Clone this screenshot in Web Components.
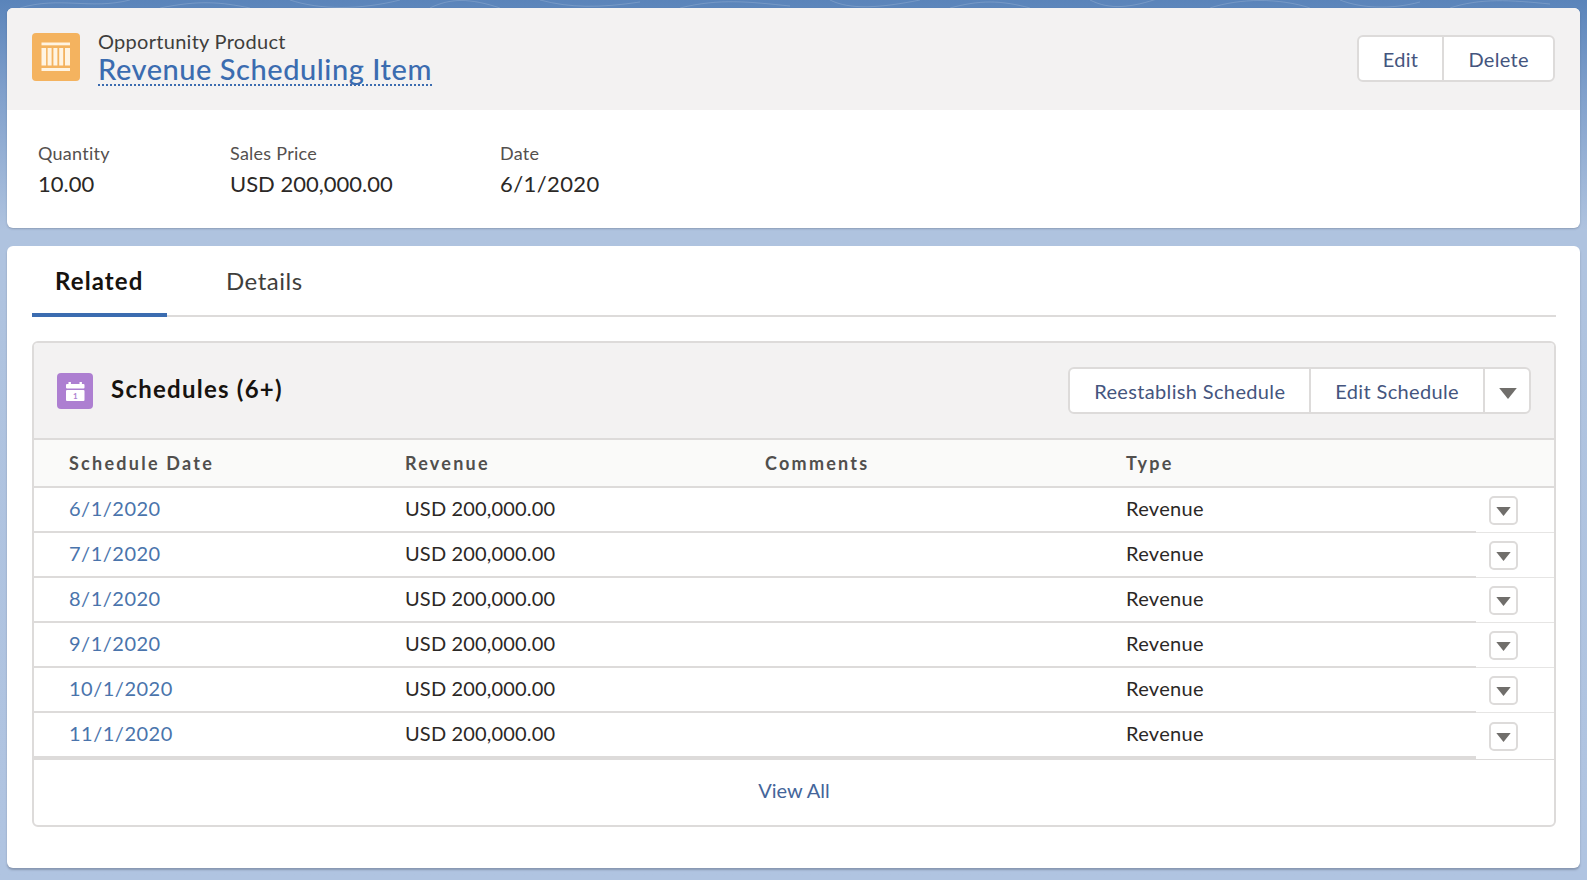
<!DOCTYPE html>
<html lang="en">
<head>
<meta charset="utf-8">
<title>Revenue Scheduling Item</title>
<style>
  html, body { margin: 0; padding: 0; }
  body {
    width: 1587px;
    height: 880px;
    overflow: hidden;
    font-family: Lato, "Open Sans", sans-serif;
    background: linear-gradient(#5a84ba 0, #7f9fcb 90px, #afc3df 230px, #b0c4e1 880px);
  }
  #bg-lines { position: absolute; left: 0; top: 0; width: 1587px; height: 12px; }
  #page { position: relative; display: flex; flex-direction: column; gap: 18px; padding: 8px 7px 0 7px; }
</style>
</head>
<body>
<svg id="bg-lines" viewBox="0 0 1587 12" fill="none" stroke="#fff" stroke-opacity="0.16">
  <path d="M20 8C60-4 90 10 130 0M160 8c40-8 60-6 90 0M290 0c30 10 70 10 110 0M430 8c20-10 40-10 70 0M540 0c30 8 60 8 100 2M680 8c40-10 70-6 110-2M830 0c20 10 50 8 90 0M950 8c30-8 50-8 80 0M1090 0c20 10 40 8 70-2M1210 8c30-10 70-10 100 0M1340 0c20 8 50 10 80 2M1450 8c30-10 60-8 100-4"/>
</svg>
<div id="page">
  <record-highlights icon-title="Opportunity Product" record-title="Revenue Scheduling Item">
    <highlight-field label="Quantity" style="width:192px">10.00</highlight-field>
    <highlight-field label="Sales Price" style="width:270px">USD 200,000.00</highlight-field>
    <highlight-field label="Date" class="date">6/1/2020</highlight-field>
  </record-highlights>
  <related-card>
    <schedule-row date="6/1/2020"></schedule-row>
    <schedule-row date="7/1/2020"></schedule-row>
    <schedule-row date="8/1/2020"></schedule-row>
    <schedule-row date="9/1/2020"></schedule-row>
    <schedule-row date="10/1/2020"></schedule-row>
    <schedule-row date="11/1/2020" last></schedule-row>
  </related-card>
</div>

<script>
const caret = (w, h) => `<svg width="${w}" height="${h}" viewBox="0 0 16 10"><path d="M0 0h16L8 10z" fill="#706e6b"/></svg>`;

class RecordHighlights extends HTMLElement {
    constructor() {
        super();
        this.shadowDOM = this.attachShadow({ mode: "open" });
    }
    connectedCallback() {
        this.shadowDOM.innerHTML = `
      <style>
        * { box-sizing: border-box; }
        :host {
            display: block;
            height: 220px;
            background: #fff;
            border-radius: 6px;
            overflow: hidden;
            box-shadow: 0 1px 2px rgba(60, 70, 90, 0.3);
        }
        .head {
            height: 102px;
            background: #f3f2f2;
            display: flex;
            align-items: flex-start;
            padding: 25px 25px 0 25px;
        }
        .icon {
            width: 48px;
            height: 48px;
            border-radius: 4px;
            background: #f4b35f;
            flex: none;
        }
        .titles { margin-left: 18px; flex: 1; margin-top: -5px; }
        .kind { font-size: 20px; line-height: 26px; color: #3e3e3c; letter-spacing: 0.28px; }
        .name {
            display: inline-block;
            font-size: 29px;
            line-height: 30px;
            font-weight: 500;
            letter-spacing: 0.55px;
            color: #3b6cb0;
            border-bottom: 2px dotted #3b6cb0;
        }
        button-group { margin-top: 2px; }
        .fields { display: flex; padding: 31px 0 0 31px; }
      </style>
      <div class="head">
        <div class="icon">
          <svg width="48" height="48" viewBox="0 0 48 48" fill="#fff4e2">
            <rect x="9.5" y="9.5" width="28.5" height="2.8"/>
            <rect x="9.5" y="15" width="4.6" height="17.5"/>
            <rect x="15.6" y="15" width="4" height="17.5"/>
            <rect x="21.4" y="15" width="4" height="17.5"/>
            <rect x="27.2" y="15" width="4" height="17.5"/>
            <rect x="33" y="15" width="5" height="17.5"/>
            <rect x="9.5" y="35" width="28.5" height="3"/>
          </svg>
        </div>
        <div class="titles">
          <div class="kind">${this.getAttribute("icon-title")}</div>
          <div class="name">${this.getAttribute("record-title")}</div>
        </div>
        <button-group>
          <group-button>Edit</group-button>
          <group-button>Delete</group-button>
        </button-group>
      </div>
      <div class="fields"><slot></slot></div>
    `;
    }
}

class HighlightField extends HTMLElement {
    constructor() {
        super();
        this.shadowDOM = this.attachShadow({ mode: "open" });
    }
    connectedCallback() {
        this.shadowDOM.innerHTML = `
      <style>
        :host { display: block; flex: none; }
        :host(.date) .value { letter-spacing: 0.4px; }
        .label { font-size: 18px; line-height: 24px; color: #54504e; letter-spacing: 0.25px; }
        .value { font-size: 22px; line-height: 28px; margin-top: 5px; color: #2b2826; }
      </style>
      <div class="label">${this.getAttribute("label")}</div>
      <div class="value"><slot></slot></div>
    `;
    }
}

class ButtonGroup extends HTMLElement {
    constructor() {
        super();
        this.shadowDOM = this.attachShadow({ mode: "open" });
    }
    connectedCallback() {
        this.shadowDOM.innerHTML = `
      <style>
        :host {
            display: flex;
            height: 47px;
            flex: none;
            background: #fff;
            border: 2px solid #dddbda;
            border-radius: 6px;
        }
        ::slotted(*:not(:first-child)) { border-left: 2px solid #dddbda; }
      </style>
      <slot></slot>
    `;
    }
}

class GroupButton extends HTMLElement {
    constructor() {
        super();
        this.shadowDOM = this.attachShadow({ mode: "open" });
    }
    connectedCallback() {
        this.shadowDOM.innerHTML = `
      <style>
        :host {
            display: flex;
            align-items: center;
            justify-content: center;
            padding: 0 24px;
            font-size: 20px;
            letter-spacing: 0.35px;
            color: #44557e;
        }
      </style>
      <slot></slot>
    `;
    }
}

class RelatedCard extends HTMLElement {
    constructor() {
        super();
        this.shadowDOM = this.attachShadow({ mode: "open" });
    }
    connectedCallback() {
        this.shadowDOM.innerHTML = `
      <style>
        * { box-sizing: border-box; }
        :host {
            display: block;
            height: 622px;
            background: #fff;
            border-radius: 6px;
            box-shadow: 0 2px 2px rgba(60, 70, 90, 0.35);
            padding: 0 24px 0 25px;
        }
        .tabs {
            display: flex;
            height: 71px;
            border-bottom: 2px solid #dddbda;
        }
        .tab {
            width: 135px;
            height: 71px;
            padding-top: 18px;
            padding-left: 23px;
            font-size: 24px;
            line-height: 34px;
            letter-spacing: 0.5px;
            color: #3e3e3c;
        }
        .tab.active {
            font-weight: 700;
            letter-spacing: 1.1px;
            color: #16130f;
            border-bottom: 4px solid #3b6cb0;
        }
        .tab + .tab { margin-left: 36px; }
        .panel {
            margin-top: 24px;
            height: 486px;
            border: 2px solid #dddbda;
            border-radius: 6px;
            overflow: hidden;
            display: flex;
            flex-direction: column;
        }
        .panel-head {
            height: 97px;
            flex: none;
            background: #f3f2f2;
            border-bottom: 2px solid #dddbda;
            display: flex;
            align-items: center;
            padding: 0 23px 0 23px;
        }
        .panel-head .icon {
            width: 36px;
            height: 36px;
            border-radius: 4px;
            background: #ad7fd1;
            flex: none;
        }
        .panel-title {
            font-size: 24px;
            font-weight: 700;
            letter-spacing: 1.25px;
            color: #16130f;
            margin: 0 0 5px 18px;
            flex: 1;
        }
        .thead {
            height: 48px;
            flex: none;
            background: #fafaf9;
            border-bottom: 2px solid #dddbda;
            display: grid;
            grid-template-columns: 336px 360px 361px 1fr;
            align-items: center;
            padding-left: 35px;
            padding-bottom: 1px;
            font-size: 18px;
            font-weight: 700;
            letter-spacing: 2.25px;
            color: #514f4d;
        }
        .foot {
            flex: 1;
            display: flex;
            align-items: center;
            justify-content: center;
            padding-bottom: 5px;
            font-size: 20px;
            color: #44659a;
        }
        group-button.caret { padding: 6px 12px 0 14px; }
      </style>
      <div class="tabs">
        <div class="tab active">Related</div>
        <div class="tab">Details</div>
      </div>
      <div class="panel">
        <div class="panel-head">
          <div class="icon">
            <svg width="36" height="36" viewBox="0 0 36 36">
              <rect x="11.5" y="9" width="2.4" height="3" fill="#fff"/>
              <rect x="22.5" y="9" width="2.4" height="3" fill="#fff"/>
              <rect x="9" y="11" width="18.5" height="4.5" rx="1" fill="#fff"/>
              <rect x="9" y="17" width="18.5" height="11" rx="1" fill="#fff"/>
              <text x="18.2" y="26" text-anchor="middle" font-size="8" font-weight="700" font-family="Lato" fill="#ad7fd1">1</text>
            </svg>
          </div>
          <div class="panel-title">Schedules (6+)</div>
          <button-group>
            <group-button>Reestablish Schedule</group-button>
            <group-button>Edit Schedule</group-button>
            <group-button class="caret">${caret(18, 11)}</group-button>
          </button-group>
        </div>
        <div class="thead">
          <div>Schedule Date</div><div>Revenue</div><div>Comments</div><div>Type</div>
        </div>
        <slot></slot>
        <div class="foot">View All</div>
      </div>
    `;
    }
}

class ScheduleRow extends HTMLElement {
    constructor() {
        super();
        this.shadowDOM = this.attachShadow({ mode: "open" });
    }
    connectedCallback() {
        const last = this.hasAttribute("last");
        this.shadowDOM.innerHTML = `
      <style>
        * { box-sizing: border-box; }
        :host { display: flex; height: ${last ? 47 : 45}px; flex: none; font-size: 20px; color: #2b2826; }
        .cells {
            flex: 1;
            display: grid;
            grid-template-columns: 336px 360px 361px 1fr;
            align-items: center;
            padding: 0 0 3px 35px;
            letter-spacing: 0.16px;
            border-bottom: ${last ? 4 : 2}px solid #dddbda;
        }
        .cells div:last-child { letter-spacing: 0.3px; }
        a { color: #4a74ac; letter-spacing: 0.5px; }
        .act {
            width: 78px;
            flex: none;
            display: flex;
            align-items: center;
            padding-left: 13px;
            border-bottom: ${last ? "1px solid #dddbda" : "1px solid #e6e5e4"};
        }
        .btn {
            width: 29px;
            height: 29px;
            border: 2px solid #dddbda;
            border-radius: 5px;
            background: #fff;
            display: flex;
            align-items: center;
            justify-content: center;
            padding-top: 2px;
        }
      </style>
      <div class="cells">
        <div><a>${this.getAttribute("date")}</a></div>
        <div>USD 200,000.00</div>
        <div></div>
        <div>Revenue</div>
      </div>
      <div class="act"><div class="btn">${caret(15, 9)}</div></div>
    `;
    }
}

customElements.define("record-highlights", RecordHighlights);
customElements.define("highlight-field", HighlightField);
customElements.define("button-group", ButtonGroup);
customElements.define("group-button", GroupButton);
customElements.define("related-card", RelatedCard);
customElements.define("schedule-row", ScheduleRow);
</script>
</body>
</html>
